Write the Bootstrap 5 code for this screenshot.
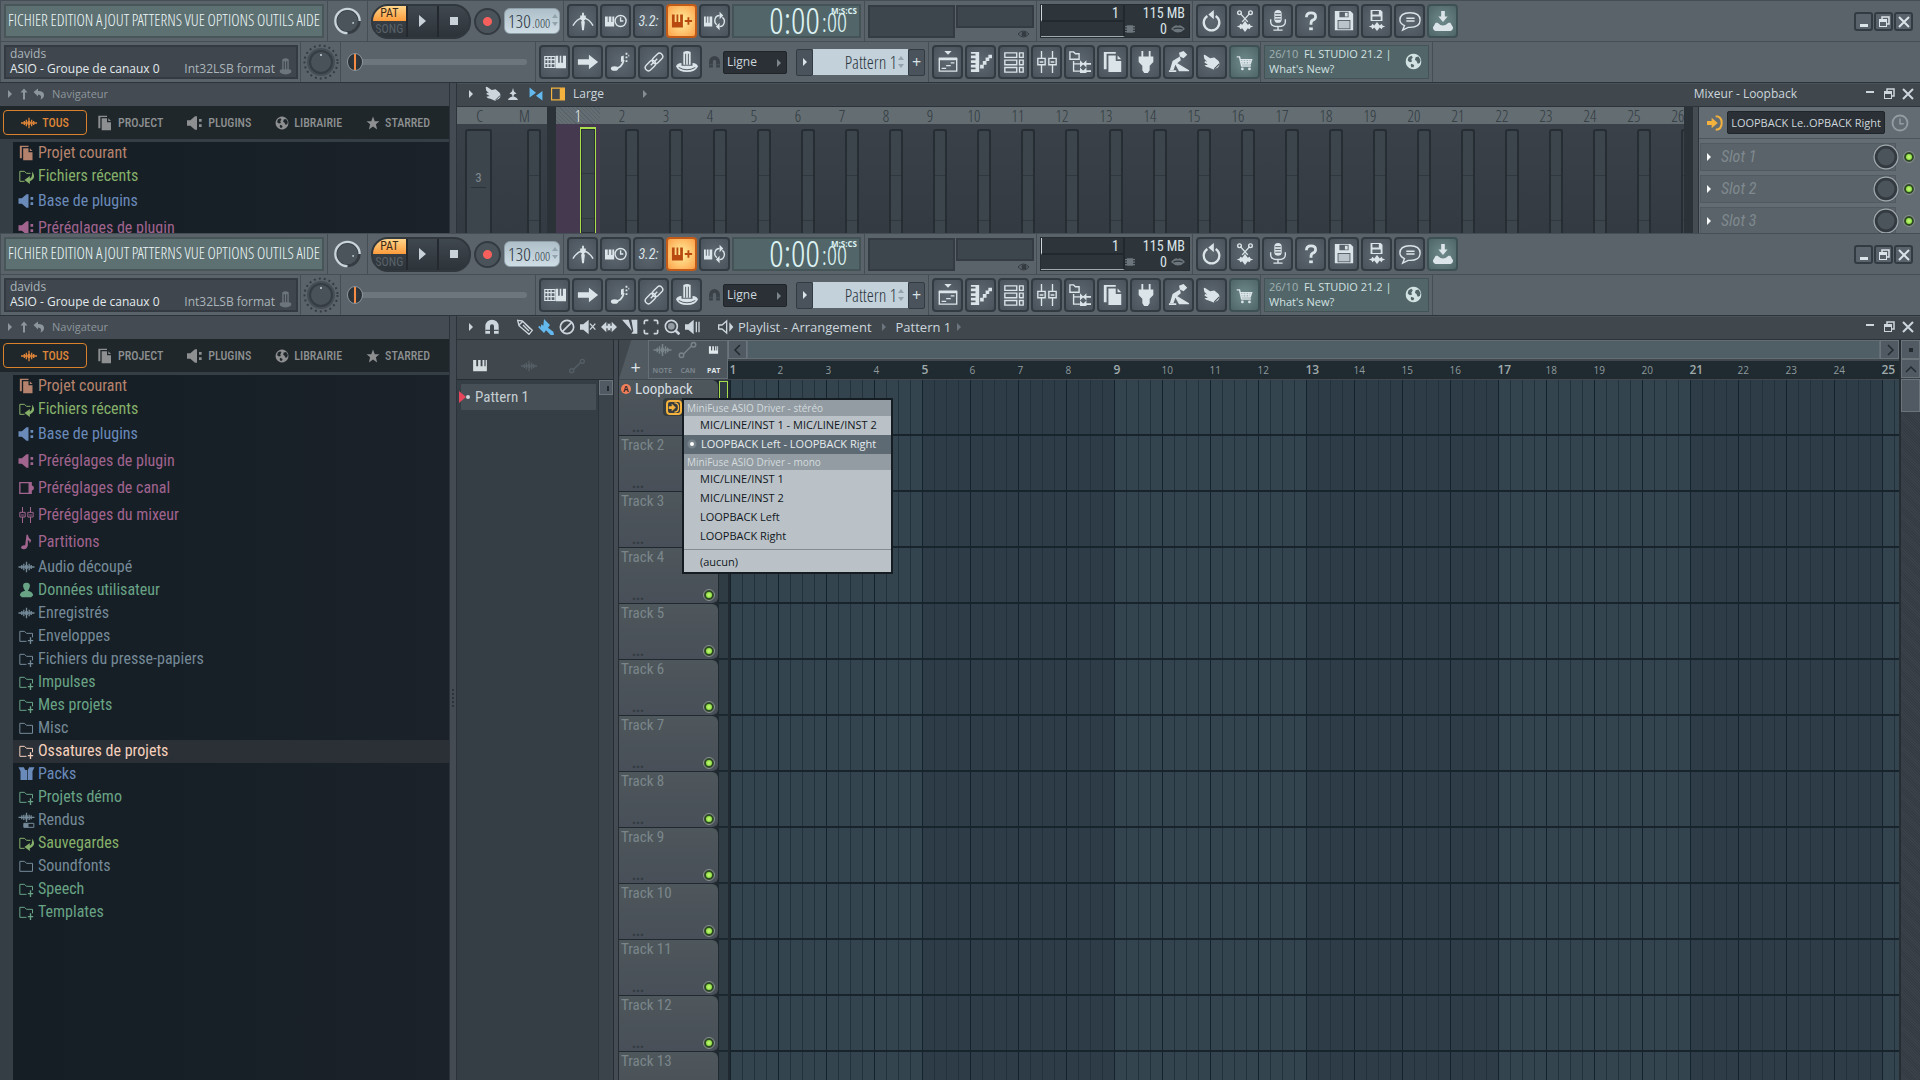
<!DOCTYPE html>
<html lang="fr">
<head>
<meta charset="utf-8">
<meta name="viewport" content="width=device-width, initial-scale=1">
<title>FL Studio - Loopback</title>
<link rel="stylesheet" href="https://cdn.jsdelivr.net/npm/bootstrap@5.3.0/dist/css/bootstrap.min.css">
<style>
:root{
  --ui:"Open Sans","Noto Sans",sans-serif;
  --cond:"Roboto Condensed",Roboto,sans-serif;
  --slim:"Open Sans Condensed Light","Open Sans Condensed","Roboto Condensed",sans-serif;
  --bar:#5b636a; --line:#454d55; --dark:#2c333a; --lcd:#526669; --pane:#40484e; --text:#cdd6dc; --ink:#dbe4e9;
}
body{font-family:var(--ui);font-size:12px;line-height:16px;background:#353d45;color:var(--text);overflow:hidden}
button,input,select{font:inherit;color:inherit;border:0;padding:0;background:none;border-radius:0}
a{color:inherit;text-decoration:none}
svg.ic{width:24px;height:24px;fill:currentColor;stroke-width:2;flex:none;display:block}
svg.sm{width:16px;height:16px}
.ln{fill:none;stroke:currentColor}
.shot{height:233px;overflow:hidden;flex:none}
.shot-main{flex:1 1 0;min-height:0}

/* toolbar */
.strip{height:41px;background:var(--bar);border-top:1px solid var(--line);box-shadow:inset 1px 0 var(--line)}
.seg{height:40px;border-right:1px solid var(--line);padding:0 3px;flex:none}
.g2{gap:2px}.g3{gap:3px}
.menu-lcd{width:320px;height:34px;background:#5d7173;border:2px solid #48565a;font:16px/28px var(--slim);color:#eef6f6;padding:0 2px}
.tb{width:31px;height:34px;border:2px solid #333b42;border-radius:4px;background:radial-gradient(#5e6870,#4a535b);color:var(--ink)}
.tb svg.ic{width:22px;height:22px}
.tb svg.s-hand,.tb svg.s-cart,.tb svg.s-globe{width:17px;height:17px}
.tb i{font:italic 14px/20px var(--cond)}
.tb-hot{background:radial-gradient(#fff2a0,#ffa851 90%);color:#b84a10;border-color:#c25a18}
.tb-teal{background:radial-gradient(#6f8a8b,#4f6567);border-color:#3d5154}
.transport{width:100px;height:35px;border-radius:17px;background:linear-gradient(#40484f,#2c3339);border:2px solid #30373d;overflow:hidden}
.patsong{width:33px;font:12px/14px var(--cond)}
.patsong b{font-weight:400;background:linear-gradient(#ffd58a,#ff9c3c);color:#3a2a18;height:15px;text-align:center;display:block}
.patsong span{color:#59626a;text-align:center;line-height:16px}
.tp{width:32px;border-left:2px solid #23292e;color:#c9d2d8}
.rec{width:27px;height:27px;border-radius:50%;background:radial-gradient(#f5605c 0 4px,#4a525a 5px);border:2px solid #333a40}
.tempo{width:56px;height:26px;border-radius:6px;background:linear-gradient(#aebfc9,#cfdde5);color:#2b3640;border:1px solid #90a0a9}
.tempo input{width:27px;font:19px/24px var(--slim);padding-left:3px}
.tempo small{font:13px/24px var(--slim);padding-top:2px;width:19px}
.tempo svg.ic,.patname svg.ic{color:#93a3ad}
.clock{width:129px;height:34px;background:var(--lcd);border:2px solid #445456;color:#ddf2f2;font-family:var(--slim);padding-right:12px;gap:2px;position:relative}
.clock .big{font-size:36px;line-height:29px}.clock .mid{font-size:25px;line-height:33px}
.clock em{position:absolute;right:2px;top:0;font:bold 8px/10px var(--ui)}
.scope{background:#3d454d;border:2px solid #343b42}
.mem{width:150px;height:34px;background:#2d353b;border:1px solid #272e33;font:14px/16px var(--cond);color:#dce4e8}
.mem .cpu{width:84px;border-right:2px solid #22292e;border-bottom:1px solid #a0a9ae}
.mem .cpu span{height:17px;border-bottom:2px solid #22292e;border-left:1px solid #cfd6da}
.wb{width:19px;height:19px;border:2px solid #333b42;border-radius:3px;background:#59626a;color:var(--ink)}
.hint{width:294px;height:34px;background:#3f464d;border:2px solid #333a41;line-height:15px;color:#abb5bb;padding:0 4px 1px}
.hint .hot{color:#e3eaee}
.pitch{-webkit-appearance:none;appearance:none;background:#6d767d;border-radius:3px;width:180px;height:6px}
.pitch::-webkit-slider-thumb{-webkit-appearance:none;width:16px;height:18px;border-radius:50%;background:linear-gradient(90deg,transparent 6px,#f58b45 6px 8px,transparent 8px),radial-gradient(#333b42,#262c31);border:1px solid #8b949b}
.darkbox{background:#2a3035;border:1px solid #1f2529;border-radius:2px;color:var(--text)}
.snapsel{width:64px;height:23px;padding-left:3px;appearance:none}
.snapwrap{position:relative}.snapwrap svg{position:absolute;right:0;top:4px;color:#7d868d;pointer-events:none}
.patbtn{width:17px;height:27px;border:1px solid #333b42;border-radius:2px;background:#4a535b;color:var(--ink)}
.patname{width:95px;height:26px;background:#c3d1db;color:#2b3640}
.patname input{width:84px;font:18px/24px var(--slim);text-align:right}
.news{width:165px;height:34px;background:var(--lcd);border:1px solid #445456;font-size:11px;line-height:15px;color:#d3e2e2;padding:0 2px 2px 4px}

/* browser */
.work{border-top:1px solid var(--dark);flex:1 1 0;min-height:0}
.browser{width:449px;flex:none}
.bhead{height:23px;background:#444b52;color:#8d969c;padding:0 0 2px 2px;font-size:11px}
.btabs{height:33px;background:#1f272b;color:#8d8f90;font:500 12px/16px var(--cond);padding-left:3px}
.btabs button{height:25px;display:flex;align-items:center;gap:5px}
.btabs .on{width:84px;border:1px solid #d9822b;border-radius:4px;color:#dd8438;justify-content:center;margin-right:10px}
.blist{margin:3px 0 0 13px;background:linear-gradient(90deg,#151e24,#1b222a);overflow:hidden;flex:1 1 0;font:16px/20px var(--cond)}
.blist a{height:23px;padding:0 0 2px 5px;white-space:nowrap}
.blist span{padding-left:3px}
.blist a.tall{height:27px}.blist a.sel{background:#2a3036;color:#f6d0bd!important}
.c-or{color:#b5836d}.c-gr{color:#86b06a}.c-bl{color:#6a8aba}.c-pk{color:#a0648f}.c-sl{color:#758a98}.c-tq{color:#69a386}
.splitter{width:8px;background:#444b52;border:solid var(--dark);border-width:0 1px;flex:none}
.splitter i{width:2px;height:18px;background:repeating-linear-gradient(#2c333a 0 2px,#0000 2px 4px)}

/* windows */
.whead{height:23px;flex:none;background:var(--pane);box-shadow:inset 0 1px #4a5259;padding:0 0 2px 6px}
.pl-title{font-size:13px}
.pt{margin-left:5px}.pt-pen,.pt-spk{margin-left:17px}.pt-brush{color:#63b9ee}
.rule{height:1px;background:var(--dark);flex:none}
.mcell{flex:0 0 44px}.mcell.wide{flex-basis:45px}
.mnum{height:17px;line-height:19px;background:#636d72;color:#31393f;font-size:16px;font-family:var(--slim);text-align:center;flex:none}
.mbody{background:linear-gradient(#3a4148,#333a41);flex:1;padding:5px 0 0 25px}
.meter{width:14px;height:100%;border:2px solid #262d33;border-bottom:0;border-radius:3px 3px 0 0;background:repeating-linear-gradient(transparent 0 44px,#30373d 44px 45px),#3d454c}
.meter.fat{width:27px;padding-top:40px;font:13px/14px var(--cond);text-align:center;color:#808a90;background:#3d454c}
.meter.fat span{display:block;border-bottom:1px solid #2b3238;margin:0 4px;padding-bottom:2px}
.cur .mnum{color:#eef3f5;background:repeating-linear-gradient(45deg,#636d72 0 2px,#59636a 2px 3px)}
.cur .mbody{background:#44394e;padding:3px 0 0 24px}
.cur .meter{width:16px;border:1px solid #a8de4b;border-top-width:2px;border-bottom:0;border-radius:0;box-shadow:inset 0 0 0 1px #262d33}
.vdiv{width:9px;background:#2b3238;flex:none}
.fx{width:222px;background:#636c72;border-left:1px solid var(--dark);flex:none}
.fxin{height:32px;border-bottom:1px solid #4c555b}
.fxin .darkbox{width:158px;height:23px;font-size:11px;margin-right:6px}
.slot{height:28px;margin:4px 0 0 1px}
.slot button.nm{width:196px;height:28px;border:1px solid #515a60;background:#5a6369;font:italic 16px/24px var(--cond);color:#7f898f;text-align:left}
.slot .kn{position:relative;margin-left:-24px}
.led{width:10px;height:10px;border-radius:50%;background:radial-gradient(#c6fa7a,#7ad62e);border:2px solid #2f4a25;outline:1px solid #88918f;appearance:none;flex:none;margin:0}

.picker{width:156px;flex:none;background:var(--pane)}
.ptabs{height:40px;flex:none;color:#555e65;border-bottom:1px solid #262d33;gap:30px;padding:12px 0 0 14px}
.plist{background:#353d45;flex:1}
.pitem{height:26px;margin:4px 2px 0 4px;background:#464f55;font:15px/26px var(--cond);color:#c4cdd2;border-radius:1px}
.pitem svg{margin-left:-2px}
.vsb{width:15px;background:#3c444b;border-left:1px solid #2b3238;flex:none}
.vsb button,.sbtn{border:1px solid #6b747a;background:#515a62;color:#222a30}
.vsb button{height:15px;width:14px}
.gutter{width:6px;background:#444b52;border:solid #262d33;border-width:0 1px;flex:none}
.plbar{height:40px;flex:none;background:#40484e}
.addtab{width:30px;height:39px;background:#515a61;color:var(--ink);clip-path:polygon(42% 0,100% 0,100% 100%,0 100%);font-size:18px;padding:14px 0 0 4px}
.ttabs{width:81px;height:39px;background:#4d565d;border:1px solid #666f76;color:#79838a}
.ttabs button{flex:1;font:bold 7px/10px var(--ui);display:flex;flex-direction:column;align-items:center;gap:7px}
.ttabs svg.ic{width:19px;height:18px}
.ttabs .on{color:#e3eaee}
.hsb{background:#505f66;border:1px solid #626e74;flex:1}
.sbtn{width:19px;height:19px;flex:none}
.ruler{height:18px;margin-top:2px;background:#1f2a31;color:#8f9a9c;overflow:hidden;font:10px/18px var(--ui)}
.ruler span{flex:0 0 48px;padding-left:2px}
.ruler span.maj{font-size:12px;font-weight:600;color:#a0aaab}
.thead{width:99px;flex:none;background:#20292f;overflow:hidden}
.trk{height:56px;border-bottom:1px solid #20292f;border-radius:0 6px 6px 0;background:linear-gradient(#4e575b,#484f58);font:15px/18px var(--cond);color:#7b868b;padding-left:2px;position:relative}
.trk .more{position:absolute;left:13px;bottom:0;font:bold 14px/16px var(--ui);color:#333b42}
.trk .led{position:absolute;right:4px;bottom:3px}
.first{color:#d5dde1}
.badgeA{width:10px;height:10px;border-radius:50%;background:#f0805c;color:#3a2a28;font:bold 8px/10px var(--ui);text-align:center}
.inbtn{position:absolute;right:0;top:18px;width:55px;height:18px;background:#353c40;border-radius:4px 0 0 4px;padding:1px 0 0 3px;color:#f3b13e}
.inbtn svg.ic{border:2px solid;border-radius:4px;width:16px;height:15px}
.pre{width:12px;flex:none;background:linear-gradient(#0000 54px,#1b2830 54px) 0 0/100% 56px,#303c44;border:solid #20292f;border-width:0 2px 0 1px}
.pre i{display:block;height:54px;border:1px solid #a8de4b;margin-top:1px}
.grid{background:
  linear-gradient(#0000 54px,#17242b 54px) 0 0/100% 56px,
  linear-gradient(90deg,#14222b 1px,#0000 1px) 0 0/48px 100%,
  linear-gradient(90deg,#22313a 1px,#0000 1px) 0 0/12px 100%,
  linear-gradient(90deg,#34444e 50%,#2d3c46 50%) 0 0/384px 100%;flex:1}
.rsb{width:21px;background:repeating-linear-gradient(45deg,#3a4148 0 1px,#343b42 1px 2px);border-left:2px solid #252d33;flex:none}
.popup{position:absolute;left:682px;top:398px;width:211px;border:2px solid #151d23;background:#bac2c8;color:#11171c;font:11px/17px var(--ui);z-index:5}
.popup h6{height:16px;margin:0;background:#929ca2;color:#d5dbdf;font:10px/16px var(--ui);padding-left:3px}
.popup button{display:flex;align-items:center;height:19px;width:100%;padding:0 0 2px 16px;white-space:nowrap}
.popup .sel{background:#5d6a73;color:#e6ecef;padding-left:3px}
.popup hr{margin:3px 0;border-top:1px solid #848d93;opacity:1}
</style>
</head>
<body class="vh-100 d-flex flex-column">

<svg class="d-none">
 <symbol id="tri" viewBox="0 0 16 16"><path d="M6 4l4 4-4 4z"/></symbol>
 <symbol id="play" viewBox="0 0 24 24"><path d="M9 6l7 6-7 6z"/></symbol>
 <symbol id="stop" viewBox="0 0 24 24"><path d="M8 8h8v8H8z"/></symbol>
 <symbol id="metro" viewBox="0 0 24 24"><path class="ln" stroke-width="1.500" d="M1 17Q5 10 12 8q7 2 11 9"/><path d="M12 9l2 4-1 9h-2l-1-9z"/><path d="M11 3h2v3h2v4l-3 2-3-2V6h2z"/></symbol>
 <symbol id="wait" viewBox="0 0 24 24"><path d="M0 7h3v6h1V7h3v6h1V7h2v11H0z"/><circle class="ln" stroke-width="1.500" cx="17" cy="12" r="6"/><path class="ln" stroke-width="1.500" d="M17 8v4h3"/></symbol>
 <symbol id="blend" viewBox="0 0 24 24"><path d="M1 5h3v8h2V5h2v8h2V5h3v14H1zM18 8h2v3h3v2h-3v3h-2v-3h-3v-2h3z"/></symbol>
 <symbol id="loop" viewBox="0 0 24 24"><path d="M0 7h2v7h1V7h2v7h1V7h3v11H0zM17 2l4 4-4 4zM17 22l-4-4 4-4z"/><path class="ln" stroke-width="1.500" d="M14 16q-3-2-2-6 1-4 5-4M20 8q3 2 2 6-1 4-5 4"/></symbol>
 <symbol id="piano" viewBox="0 0 24 24"><path d="M1 3h5v10h3V3h4v10h3V3h3v10h2V3h2v18H1z"/></symbol>
 <symbol id="undo" viewBox="0 0 24 24"><path class="ln" stroke-width="2.500" d="M7 6.500a8.500 8.500 0 1 0 9 0"/><path d="M8 5l6-5v10z"/></symbol>
 <symbol id="cut" viewBox="0 0 24 24"><path class="ln" stroke-width="1.500" d="M7 4l8 9M17 4l-8 9"/><circle class="ln" stroke-width="1.500" cx="6" cy="3" r="2"/><circle class="ln" stroke-width="1.500" cx="18" cy="3" r="2"/><path d="M3 18l3-1 1-2 2 1 3-4 3 4 2-1 1 2 3 1-3 1-1 2-2-1-3 4-3-4-2 1-1-2z"/></symbol>
 <symbol id="mic" viewBox="0 0 24 24"><rect x="8" y="0" width="8" height="14" rx="4"/><path class="ln" stroke-width="1.500" d="M4 10v3q0 5 8 5t8-5v-3M12 18v4M7 22h10"/><path stroke="#4a535b" stroke-width="1" d="M9 4h6M9 7h6M9 10h6"/></symbol>
 <symbol id="help" viewBox="0 0 24 24"><path class="ln" stroke-width="3" d="M7 8q0-5 5-5t5 4q0 3-3 4-2 1-2 4v1"/><path d="M10 19h4v3h-4z"/></symbol>
 <symbol id="save" viewBox="0 0 24 24"><path fill-rule="evenodd" d="M2 1h17l3 3v18H2zm5 1v6h10V2zm-2 9v10h14V11zM13 3h3v4h-3z"/><path opacity=".75" d="M6 12h12v8H6z"/></symbol>
 <symbol id="savenew" viewBox="0 0 24 24"><path fill-rule="evenodd" d="M5 0h11l2 2v10H5zm2 1v4h7V1zm0 6v4h9V7z"/><path d="M3 18l3-1 1-2 2 2 3-4 3 4 2-2 1 2 3 1-3 1-1 2-2-2-3 4-3-4-2 2-1-2z"/></symbol>
 <symbol id="chat" viewBox="0 0 24 24"><path class="ln" stroke-width="1.500" d="M12 3c7 0 11 3 11 8s-4 8-11 8h-2l-6 3 2-5q-5-2-5-6c0-5 4-8 11-8z"/><path class="ln" stroke-width="1.500" d="M8 9h9M8 12h9"/></symbol>
 <symbol id="dl" viewBox="0 0 24 24"><path d="M10 1h4v6h3l-5 6-5-6h3zM1 19l3-5h2q6 6 12 0h2l3 5q0 4-5 4H6q-5 0-5-4z"/></symbol>
 <symbol id="min" viewBox="0 0 16 16"><path d="M4 10h8v3H4z"/></symbol>
 <symbol id="dash" viewBox="0 0 16 16"><path d="M4 5h8v2H4z"/></symbol>
 <symbol id="rest" viewBox="0 0 16 16"><path class="ln" stroke-width="1.500" d="M6 5V3h7v7h-2"/><path fill-rule="evenodd" d="M3 5h8v8H3zm1 3v4h6V8z"/></symbol>
 <symbol id="x" viewBox="0 0 16 16"><path class="ln" d="M3 3l10 10M13 3L3 13"/></symbol>
 <symbol id="jack" viewBox="0 0 16 24"><path d="M4 4q4-3 8 0v12H4zM1 17q7-4 14 0v3q-7 5-14 0z"/><path stroke="#3f464d" stroke-width="1.500" d="M6.500 6v10M9.500 6v10"/></symbol>
 <symbol id="typing" viewBox="0 0 28 24"><path class="ln" stroke-width="1.500" d="M1 5h13v14H1zM5 5v14M9 5v14M1 9h13M1 14h13"/><path d="M15 4h3v9h2V4h2v9h2V4h4v16H15z"/></symbol>
 <symbol id="right" viewBox="0 0 24 24"><path d="M1 9h12V4l10 8-10 8v-5H1z"/></symbol>
 <symbol id="slide" viewBox="0 0 24 24"><path class="ln" stroke-width="2" d="M5 19q8 0 10-9"/><ellipse cx="5" cy="19" rx="4" ry="2.500"/><path d="M12 6l3-1v6l-3 1zM17 2h2v2h-2zM17 6h2v2h-2zM17 10h2v2h-2zM20 4h1v2h-1z"/></symbol>
 <symbol id="link" viewBox="0 0 24 24"><g class="ln" stroke-width="1.500" transform="rotate(-45 12 12)"><rect x="0" y="8.500" width="13" height="7" rx="3.500"/><rect x="11" y="8.500" width="13" height="7" rx="3.500"/><path d="M7 12h10"/></g></symbol>
 <symbol id="dock" viewBox="0 0 24 24"><path d="M8 1q4-2 8 0v14H8z"/><path d="M0 17q1-4 6-4v3h12v-3q5 0 6 4-3 6-12 6T0 17z"/><path stroke="#4a535b" stroke-width="1" fill="none" d="M10.500 3v12M13.500 3v12M3 18q9 5 18 0"/></symbol>
 <symbol id="magnet" viewBox="0 0 24 24"><path d="M2 22V11a10 10 0 0 1 20 0v11h-7V11a3 3 0 0 0-6 0v11z"/><path stroke="#4a535b" d="M2 17h7M15 17h7"/></symbol>
 <symbol id="plw" viewBox="0 0 24 24"><path d="M8 0h8l-4 4zM2 7h20v3H2z"/><path class="ln" stroke-width="1.500" d="M2.500 8v14h19V8M5 19h5M10 16h5M15 13h4"/></symbol>
 <symbol id="prw" viewBox="0 0 24 24"><path d="M1 1h9v22H1v-3h5v-2H1v-3h5v-2H1v-3h5V8H1V5h5V3H1zM11 15h4v4h-4zM14 11h4v4h-4zM17 7h4v4h-4zM20 4h4v4h-4z"/></symbol>
 <symbol id="rack" viewBox="0 0 24 24"><path class="ln" stroke-width="1.500" d="M2 2h13v5H2zM2 10h13v5H2zM2 18h13v5H2zM18 2h4v5h-4zM18 10h4v5h-4zM18 18h4v5h-4z"/></symbol>
 <symbol id="mix" viewBox="0 0 24 24"><path class="ln" stroke-width="1.500" d="M6 0v8M6 15v9M18 0v8M18 15v9M2 8h8v7H2zM14 8h8v7h-8zM4 12h4M16 12h4"/></symbol>
 <symbol id="tree" viewBox="0 0 24 24"><path class="ln" stroke-width="1.500" d="M1 1h4l2 2h4v6H1zM5 11v11h7M5 14h7"/><path d="M12 10l3 3h1l3-3v3h5v2h-5v3l-3-3h-1l-3 3zM12 18l3 3h1l3-3v3h5v2h-5v1H12z"/></symbol>
 <symbol id="docs" viewBox="0 0 24 24"><path d="M2 1h13v2H5v17H2zM7 5h8v6h6v12H7zM17 5l4 4h-4z"/></symbol>
 <symbol id="plug" viewBox="0 0 24 24"><path d="M7 0h2v6h6V0h2v6h3v6l-4 4v5l-2 3h-4l-2-3v-5l-4-4V6h3z"/></symbol>
 <symbol id="plugh" viewBox="0 0 24 24"><path d="M0 8h5l7-6h3v20h-3l-7-6H0zM18 6h4v4h-4zM18 14h4v4h-4z"/></symbol>
 <symbol id="robot" viewBox="0 0 24 24"><path d="M12 2l5-2 4 4-4 4-4-2zM13 6l-8 5-3 10h4l2-6 6-5z"/><path d="M7 13l1-1 15 9v1H12zM1 21h8v2H1z"/></symbol>
 <symbol id="hand" viewBox="0 0 24 24"><path d="M1 2q1-2 3 0l6 4 6-1 6 5q3 5-1 9l-6 3-7-3q-4 0-6-3l5-1-5-3 1-2 3 1-4-4z"/><path stroke="#434b52" stroke-width="1.500" fill="none" d="M16 21l7-7"/></symbol>
 <symbol id="cart" viewBox="0 0 24 24"><path class="ln" d="M1 4h4l3 13h13M6 8h16l-2 6H8M10 8v6M14 8v6M18 8v6M6 11h15"/><circle cx="9" cy="21" r="2"/><circle cx="19" cy="21" r="2"/></symbol>
 <symbol id="globe" viewBox="0 0 24 24"><path fill-rule="evenodd" d="M12 1a11 11 0 1 0 .01 0zM5 6l4-2 2 2-2 3 1 3-3 1-3-2v-2zM15 6l4-1 3 5-1 4-3 1-2-4-2-1zM9 15l4 2-1 3-3 0-1-3z"/></symbol>
 <symbol id="eye" viewBox="0 0 24 24"><path class="ln" d="M1 12q11-12 22 0-11 12-22 0z"/><circle cx="13" cy="12" r="5"/></symbol>
 <symbol id="lips" viewBox="0 0 24 16"><path d="M0 8q8-9 12-5 4-4 12 5-12 12-24 0z"/><path stroke="#2d353b" stroke-width="2" fill="none" d="M4 8q8-3 16 0"/></symbol>
 <symbol id="chip" viewBox="0 0 16 16"><path d="M3 2h10v12H3zM0 3h16v2H0zM0 7h16v2H0zM0 11h16v2H0z"/></symbol>
 <symbol id="knob" viewBox="0 0 32 32"><circle cx="16" cy="16" r="14" fill="#353d43"/><circle cx="16" cy="16" r="11" fill="#4b545b"/><path d="M29 16A13 13 0 1 0 16 29" fill="none" stroke="#c9d4da" stroke-width="2.500"/><circle cx="22" cy="18" r="1" fill="#c9d4da"/></symbol>
 <symbol id="knob2" viewBox="0 0 36 36"><circle cx="18" cy="18" r="16.500" fill="none" stroke="#343c42" stroke-dasharray="2 3"/><circle cx="18" cy="18" r="13" fill="#353d43" stroke="#454e55"/><circle cx="18" cy="18" r="10" fill="#495259"/><circle cx="18" cy="11" r="1" fill="#c9d4da"/></symbol>
 <symbol id="knob3" viewBox="0 0 28 28"><circle cx="14" cy="14" r="13" fill="#333b41"/><circle cx="14" cy="14" r="12" fill="none" stroke="#9ba5aa" stroke-width="1.500"/><circle cx="14" cy="14" r="8.500" fill="#4b545b"/></symbol>
 <symbol id="wave" viewBox="0 0 24 24"><path d="M0 11h24v2H0zM4 9h2v6H4zM7 7h2v10H7zM10 9h1V4h2v5h1v6h-1v5h-2v-5h-1zM15 7h2v10h-2zM18 9h2v6h-2z"/></symbol>
 <symbol id="star" viewBox="0 0 24 24"><path d="M12 1l3 8h8l-6 5 2 9-7-5-7 5 2-9-6-5h8z"/></symbol>
 <symbol id="up" viewBox="0 0 24 24"><path d="M12 1l7 8h-5v14h-4V9H5z"/></symbol>
 <symbol id="back" viewBox="0 0 24 24"><path d="M1 8l9-7v5q12 0 12 8 0 6-7 9 4-9-5-10v4z"/></symbol>
 <symbol id="fold" viewBox="0 0 24 24"><path class="ln" stroke-width="1.500" d="M2 5h7l3 3h9v12H2z"/></symbol>
 <symbol id="foldp" viewBox="0 0 24 24"><path class="ln" stroke-width="1.500" d="M12 20H2V5h7l3 3h9v6"/><path d="M17 14h2v4h3v2h-3v4h-2v-4h-3v-2h3z"/></symbol>
 <symbol id="foldr" viewBox="0 0 24 24"><path class="ln" stroke-width="1.500" d="M9 20H2V5h7l3 3h6"/><path d="M20 5q8 10-3 15v4l-8-6 8-6v4q5-3 3-11z"/></symbol>
 <symbol id="chan" viewBox="0 0 24 24"><path class="ln" d="M2 4h14v16H2z"/><path d="M16 3h4v5l3 2v4l-3 2v5h-4z"/></symbol>
 <symbol id="note" viewBox="0 0 24 24"><path d="M12 1h2q1 6 5 8-1 4-2 5 0-4-3-5v8q-1 6-6 6-5-1-4-4 2-3 6-2z"/></symbol>
 <symbol id="user" viewBox="0 0 24 24"><path d="M12 1q6 0 5 6-1 4-3 6 8 2 8 7l-3 3H5l-3-3q0-5 8-7-2-2-3-6-1-6 5-6z"/></symbol>
 <symbol id="pack" viewBox="0 0 24 24"><path d="M0 2h8l2 4v15H3V8zM24 2h-8l-2 4v15h7V8zM10 6h3v15h-3z"/></symbol>
 <symbol id="rend" viewBox="0 0 24 24"><path d="M0 7h24v2H0zM4 5h2v6H4zM7 4h2v8H7zM10 5h1V1h2v4h1v6h-1v4h-2v-4h-1zM15 4h2v8h-2zM18 5h2v6h-2z"/><path class="ln" stroke-width="1.500" d="M8 17h15v6H8z"/><path d="M8 17h7v6H8z"/></symbol>
 <symbol id="pin" viewBox="0 0 24 24"><path d="M12 0l2 7 5 4-5 2-1 4q7 1 9 7H2q2-6 9-7l-1-4-5-2 5-4z"/></symbol>
 <symbol id="bow" viewBox="0 0 24 24"><path d="M1 1l11 9-11 8zM23 7v16l-11-8z"/></symbol>
 <symbol id="side" viewBox="0 0 24 24"><path class="ln" d="M1 2h22v20H1z"/><path d="M15 2h8v20h-8z"/></symbol>
 <symbol id="route" viewBox="0 0 24 24"><path d="M0 9h7V4l9 8-9 8v-5H0z"/><path class="ln" stroke-width="3" d="M13 2q9 0 9 10t-9 10"/></symbol>
 <symbol id="timer" viewBox="0 0 24 24"><circle class="ln" cx="12" cy="12" r="10" stroke-width="2.500"/><path class="ln" d="M12 6v7h5"/></symbol>
 <symbol id="pen" viewBox="0 0 24 24"><path class="ln" d="M1 2l7 1 15 14-5 6L3 10zM8 4l-5 5M9 9l9 9M12 7l8 8"/></symbol>
 <symbol id="brush" viewBox="0 0 24 24"><path d="M9 0l9 9-3 4 8 6 1 5h-5l-7-7-3 4-9-9 3-2 1 3 1-5 3 2z"/></symbol>
 <symbol id="no" viewBox="0 0 24 24"><circle class="ln" cx="12" cy="12" r="10" stroke-width="2.500"/><path class="ln" stroke-width="2.500" d="M19 5L5 19"/></symbol>
 <symbol id="mute" viewBox="0 0 24 24"><path d="M0 8h5l8-7v22l-8-7H0z"/><path class="ln" d="M15 7l8 9M23 7l-8 9"/></symbol>
 <symbol id="slip" viewBox="0 0 24 24"><path d="M0 12l8-8v6h2V6l2 2 2-2v4h2V4l8 8-8 8v-6h-2v4l-2-2-2 2v-4H8v6z"/></symbol>
 <symbol id="slice" viewBox="0 0 24 24"><path d="M0 1h10l5 17zM14 1h9v21h-9l3-4z"/></symbol>
 <symbol id="selr" viewBox="0 0 24 24"><path class="ln" stroke-width="2.500" d="M2 8V4q0-2 2-2h4M16 2h4q2 0 2 2v4M22 16v4q0 2-2 2h-4M8 22H4q-2 0-2-2v-4"/></symbol>
 <symbol id="zoomi" viewBox="0 0 24 24"><circle class="ln" cx="11" cy="11" r="9" stroke-width="2.500"/><circle cx="11" cy="11" r="5" opacity=".6"/><path class="ln" stroke-width="4" d="M17 17l6 6"/></symbol>
 <symbol id="playb" viewBox="0 0 24 24"><path d="M0 8h5l8-7v22l-8-7H0zM16 4h2v16h-2zM20 4h2v16h-2z"/></symbol>
 <symbol id="spk" viewBox="0 0 24 24"><path class="ln" d="M1 9h5l7-6v18l-7-6H1z"/><path d="M17 5l6 7-6 7z"/></symbol>
 <symbol id="auto" viewBox="0 0 24 24"><path class="ln" d="M7 17L17 7"/><circle class="ln" cx="4" cy="19" r="3"/><circle class="ln" cx="20" cy="5" r="3"/></symbol>
 <symbol id="spin" viewBox="0 0 8 16"><path d="M1 6l3-4 3 4zM1 10l3 4 3-4z"/></symbol>
 <symbol id="chev" viewBox="0 0 16 16"><path class="ln" stroke-width="1.500" d="M6 3l5 5-5 5"/></symbol>
 <symbol id="chevl" viewBox="0 0 16 16"><path class="ln" stroke-width="1.500" d="M11 3L6 8l5 5"/></symbol>
 <symbol id="chevu" viewBox="0 0 16 16"><path class="ln" stroke-width="1.500" d="M3 11l5-5 5 5"/></symbol>
 <symbol id="dot" viewBox="0 0 16 16"><path d="M6 6h4v4H6z"/></symbol>
 <symbol id="bar" viewBox="0 0 16 16"><path d="M7 5h2v5H7z"/></symbol>
</svg>

<template id="toolbarTpl">
 <header>
  <div class="strip d-flex">
   <div class="seg d-flex align-items-center ps-1"><nav class="menu-lcd d-flex justify-content-between"><a href="#">FICHIER</a><a href="#">EDITION</a><a href="#">AJOUT</a><a href="#">PATTERNS</a><a href="#">VUE</a><a href="#">OPTIONS</a><a href="#">OUTILS</a><a href="#">AIDE</a></nav></div>
   <div class="seg d-flex align-items-center"><button aria-label="Volume"><svg class="ic" style="width:33px;height:30px"><use href="#knob"/></svg></button></div>
   <div class="seg d-flex align-items-center g3">
    <div class="transport d-flex"><button class="patsong d-flex flex-column"><b class="w-100">PAT</b><span class="w-100">SONG</span></button><button class="tp d-grid" aria-label="Lecture"><svg class="ic m-auto"><use href="#play"/></svg></button><button class="tp d-grid" aria-label="Stop"><svg class="ic m-auto"><use href="#stop"/></svg></button></div>
    <button class="rec" aria-label="Enregistrer"></button>
    <div class="tempo d-flex"><input aria-label="Tempo" value="130"><small>.000</small><svg class="ic" style="width:8px;height:22px"><use href="#spin"/></svg></div>
   </div>
   <div class="seg d-flex align-items-center g2">
    <button class="tb d-grid" data-i="metro"></button><button class="tb d-grid" data-i="wait"></button><button class="tb" aria-label="Compte à rebours"><i>3.2:</i></button><button class="tb tb-hot d-grid" data-i="blend"></button><button class="tb d-grid" data-i="loop"></button>
    <div class="clock d-flex justify-content-end"><span class="big">0:00</span><span class="mid">:00</span><em>M:S:CS</em></div>
   </div>
   <div class="seg d-flex pt-1 pe-0"><div class="scope" style="width:87px;height:33px"></div><div style="width:81px;padding:0 2px 0 1px"><div class="scope" style="height:23px"></div><svg class="ic ms-auto me-1" style="width:13px;height:12px;color:#343c42"><use href="#eye"/></svg></div></div>
   <div class="seg d-flex align-items-center pe-0" style="width:156px"><div class="mem d-flex"><div class="cpu text-end"><span class="d-block pe-1">1</span></div><div class="flex-grow-1 text-end pe-1"><div>115 MB</div><div class="d-flex align-items-center"><svg class="ic" style="width:10px;height:10px;color:#6c757b"><use href="#chip"/></svg><span class="ms-auto me-1">0</span><svg class="ic" style="width:14px;height:10px;color:#6c757b"><use href="#lips"/></svg></div></div></div></div>
   <div class="d-flex align-items-center g2" style="padding-left:3px">
    <button class="tb d-grid" data-i="undo"></button><button class="tb d-grid" data-i="cut"></button><button class="tb d-grid" data-i="mic"></button><button class="tb d-grid" data-i="help"></button><button class="tb d-grid" data-i="save"></button><button class="tb d-grid" data-i="savenew"></button><button class="tb d-grid" data-i="chat"></button><button class="tb tb-teal d-grid" data-i="dl"></button>
   </div>
   <div class="ms-auto d-flex align-items-center" style="gap:1px;padding-right:7px"><button class="wb d-grid" data-s="min"></button><button class="wb d-grid" data-s="rest"></button><button class="wb d-grid" data-s="x"></button></div>
  </div>
  <div class="strip d-flex">
   <div class="seg d-flex align-items-center ps-1" style="padding-right:2px"><div class="hint d-flex align-items-end"><div class="flex-grow-1"><div>davids</div><div class="d-flex justify-content-between"><span class="hot">ASIO - Groupe de canaux 0</span><span class="pe-1">Int32LSB format</span></div></div><svg class="ic" style="width:13px;height:20px;color:#6c757b"><use href="#jack"/></svg></div></div>
   <div class="seg d-flex align-items-center px-0" style="width:40px"><button class="mx-auto" aria-label="Pitch"><svg class="ic" style="width:36px;height:36px"><use href="#knob2"/></svg></button></div>
   <div class="seg d-flex align-items-center" style="width:195px;padding-left:6px"><input type="range" class="pitch" value="0" aria-label="Position"></div>
   <div class="seg d-flex align-items-center g2">
    <button class="tb d-grid" data-i="typing"></button><button class="tb d-grid" data-i="right"></button><button class="tb d-grid" data-i="slide"></button><button class="tb d-grid" data-i="link"></button><button class="tb d-grid" data-i="dock"></button>
    <svg class="ic sm ms-1" style="width:13px;color:#3a4248"><use href="#magnet"/></svg>
    <div class="snapwrap"><select class="snapsel darkbox" aria-label="Aimant"><option>Ligne</option></select><svg class="ic sm"><use href="#tri"/></svg></div>
    <div class="d-flex align-items-center" style="margin-left:7px"><button class="patbtn d-grid" data-s="tri"></button><div class="patname d-flex align-items-center"><input aria-label="Pattern" value="Pattern 1"><svg class="ic" style="width:8px;height:20px"><use href="#spin"/></svg></div><button class="patbtn fs-6">+</button></div>
   </div>
   <div class="seg d-flex align-items-center pe-0 g2">
    <button class="tb d-grid" data-i="plw"></button><button class="tb d-grid" data-i="prw"></button><button class="tb d-grid" data-i="rack"></button><button class="tb d-grid" data-i="mix"></button><button class="tb d-grid" data-i="tree"></button><button class="tb d-grid" data-i="docs"></button><button class="tb d-grid" data-i="plug"></button><button class="tb d-grid" data-i="robot"></button><button class="tb d-grid" data-i="hand"></button><button class="tb tb-teal d-grid" data-i="cart"></button>
   </div>
   <div class="seg d-flex align-items-center"><a href="#" class="news d-flex align-items-center"><span class="flex-grow-1"><span style="color:#a1b1b1">26/10</span>&nbsp; FL STUDIO 21.2 |<br>What's New?</span><svg class="ic me-1" style="width:17px;height:17px"><use href="#globe"/></svg></a></div>
  </div>
 </header>
</template>

<template id="browserTpl">
 <aside class="browser d-flex flex-column">
  <div class="bhead d-flex align-items-center"><svg class="ic sm"><use href="#tri"/></svg><svg class="ic" style="width:12px;height:14px"><use href="#up"/></svg><svg class="ic" style="width:12px;height:14px;margin:0 7px 0 3px"><use href="#back"/></svg><span>Navigateur</span></div>
  <div class="btabs d-flex align-items-center">
   <button class="on"><svg class="ic sm"><use href="#wave"/></svg>TOUS</button>
   <button class="me-4"><svg class="ic sm"><use href="#docs"/></svg>PROJECT</button>
   <button class="me-4"><svg class="ic sm"><use href="#plugh"/></svg>PLUGINS</button>
   <button class="me-4"><svg class="ic" style="width:14px;height:14px"><use href="#globe"/></svg>LIBRAIRIE</button>
   <button><svg class="ic" style="width:14px;height:14px"><use href="#star"/></svg>STARRED</button>
  </div>
  <nav class="blist"></nav>
 </aside>
</template>

<section class="shot d-flex flex-column">
 <div data-use="toolbarTpl"></div>
 <div class="work d-flex">
  <div data-use="browserTpl" class="d-flex"></div>
  <div class="splitter"></div>
  <main class="flex-grow-1 d-flex flex-column overflow-hidden">
   <div class="whead d-flex align-items-center">
    <svg class="ic sm"><use href="#tri"/></svg><svg class="ic sm" style="margin:0 6px"><use href="#hand"/></svg><svg class="ic sm" style="width:12px"><use href="#pin"/></svg><svg class="ic sm" style="width:14px;color:#63b9ee;margin:0 8px 0 10px"><use href="#bow"/></svg><svg class="ic sm me-2" style="width:14px;color:#f3b13e"><use href="#side"/></svg><span>Large</span><svg class="ic sm" style="margin-left:33px;color:#858e94"><use href="#tri"/></svg>
    <span class="ms-auto">Mixeur - Loopback</span><div class="d-flex" style="width:123px;gap:3px;padding:0 4px 0 65px"><button data-s="dash" class="d-grid"></button><button data-s="rest" class="d-grid"></button><button data-s="x" class="d-grid"></button></div>
   </div>
   <div class="rule"></div>
   <div class="d-flex flex-grow-1 overflow-hidden">
    <div class="mcell wide d-flex flex-column"><div class="mnum">C</div><div class="mbody ps-2"><div class="meter fat"><span>3</span></div></div></div>
    <div class="mcell wide d-flex flex-column"><div class="mnum">M</div><div class="mbody"><div class="meter"></div></div></div>
    <div class="vdiv"></div>
    <div id="mixer" class="d-flex flex-grow-1 overflow-hidden" style="width:0"></div>
    <div class="vdiv"></div><div style="width:5px;background:#454d53"></div>
    <div class="fx">
     <div class="fxin d-flex align-items-center px-1"><svg class="ic ms-1 me-1" style="width:16px;height:20px;color:#f3b13e"><use href="#route"/></svg><button class="darkbox text-nowrap">LOOPBACK Le..OPBACK Right</button><svg class="ic" style="width:18px;height:18px;color:#939ca1"><use href="#timer"/></svg></div>
     <div id="slots"></div>
    </div>
   </div>
  </main>
 </div>
</section>

<section class="shot-main d-flex flex-column">
 <div data-use="toolbarTpl"></div>
 <div class="work d-flex">
  <div data-use="browserTpl" class="d-flex"></div>
  <div class="splitter d-grid"><i class="m-auto"></i></div>
  <main class="flex-grow-1 d-flex flex-column overflow-hidden">
   <div class="whead d-flex align-items-center pl-title" id="plhead">
    <svg class="ic sm"><use href="#tri"/></svg>
    <span class="ms-1">Playlist - Arrangement</span><svg class="ic sm mx-1 text-secondary"><use href="#tri"/></svg><span>Pattern 1</span><svg class="ic sm text-secondary"><use href="#tri"/></svg>
    <div class="ms-auto d-flex" style="gap:3px;padding-right:4px"><button data-s="dash" class="d-grid"></button><button data-s="rest" class="d-grid"></button><button data-s="x" class="d-grid"></button></div>
   </div>
   <div class="rule"></div>
   <div class="d-flex flex-grow-1 overflow-hidden">
    <div class="picker d-flex flex-column">
     <div class="ptabs d-flex align-items-center"><svg class="ic" style="width:18px;height:15px;color:#d5dde1"><use href="#piano"/></svg><svg class="ic sm" style="width:20px"><use href="#wave"/></svg><svg class="ic sm"><use href="#auto"/></svg></div>
     <div class="d-flex flex-grow-1"><div class="plist"><div class="pitem d-flex align-items-center"><svg width="12" height="14" viewBox="0 0 12 14"><path d="M0 1l7 6-7 6z" fill="#e5465c"/><circle cx="9" cy="7" r="2" fill="#cdd6dc"/></svg><span class="ms-1">Pattern 1</span></div></div><div class="vsb"><button class="d-grid" data-s="bar"></button></div></div>
    </div>
    <div class="gutter"></div>
    <div class="flex-grow-1 d-flex flex-column overflow-hidden">
     <div class="plbar d-flex">
      <button class="addtab">+</button>
      <div class="ttabs d-flex"><button><svg class="ic"><use href="#wave"/></svg>NOTE</button><button><svg class="ic"><use href="#auto"/></svg>CAN</button><button class="on"><svg class="ic py-1"><use href="#piano"/></svg>PAT</button></div>
      <div class="flex-grow-1 overflow-hidden"><div class="d-flex"><button class="sbtn d-grid" data-s="chevl"></button><div class="hsb"></div><button class="sbtn d-grid" data-s="chev"></button></div><div class="ruler d-flex" id="ruler"></div></div>
     </div>
     <div class="d-flex flex-grow-1 overflow-hidden"><div class="thead" id="tracks"></div><div class="pre"><i></i></div><div class="grid"></div></div>
    </div>
    <div class="rsb"><button class="sbtn d-grid" data-s="dot"></button><button class="sbtn d-grid" data-s="chevu"></button><div class="sbtn" style="height:33px;margin-top:1px"></div></div>
   </div>
  </main>
 </div>
</section>

<div class="popup">
 <h6>MiniFuse ASIO Driver - stéréo</h6>
 <button>MIC/LINE/INST 1 - MIC/LINE/INST 2</button>
 <button class="sel"><svg width="14" height="10" viewBox="0 0 14 10"><circle cx="5" cy="5" r="4.500" fill="#76838b"/><circle cx="5" cy="5" r="2" fill="#fff"/></svg>LOOPBACK Left - LOOPBACK Right</button>
 <h6>MiniFuse ASIO Driver - mono</h6>
 <button>MIC/LINE/INST 1</button><button>MIC/LINE/INST 2</button><button>LOOPBACK Left</button><button>LOOPBACK Right</button>
 <hr>
 <button>(aucun)</button>
</div>

<script src="https://cdn.jsdelivr.net/npm/bootstrap@5.3.0/dist/js/bootstrap.bundle.min.js"></script>
<script>
const icon=(n,c='')=>`<svg class="ic m-auto s-${n} ${c}"><use href="#${n}"/></svg>`;
document.querySelectorAll('[data-use]').forEach(h=>h.append(document.getElementById(h.dataset.use).content.cloneNode(true)));
const tools=['magnet','pen','brush','no','mute','slip','slice','selr','zoomi','playb','spk'];
document.querySelector('#plhead svg').insertAdjacentHTML('afterend',tools.map(t=>`<button class="pt pt-${t}" aria-label="${t}">${icon(t,'sm')}</button>`).join(''));
document.querySelectorAll('[data-i]').forEach(b=>{b.innerHTML=icon(b.dataset.i);b.setAttribute('aria-label',b.dataset.i)});
document.querySelectorAll('[data-s]').forEach(b=>{b.innerHTML=icon(b.dataset.s,'sm');b.setAttribute('aria-label',b.dataset.s)});
const rows=[['docs','or','Projet courant'],['foldr','gr','Fichiers récents'],['plugh','bl','Base de plugins',1],['plugh','pk','Préréglages de plugin',1],['chan','pk','Préréglages de canal',1],['mix','pk','Préréglages du mixeur',1],['note','pk','Partitions',1],['wave','sl','Audio découpé'],['user','tq','Données utilisateur'],['wave','sl','Enregistrés'],['foldp','sl','Enveloppes'],['foldp','sl','Fichiers du presse-papiers'],['foldp','tq','Impulses'],['foldp','tq','Mes projets'],['fold','sl','Misc'],['foldp','or sel','Ossatures de projets'],['pack','bl','Packs'],['foldp','tq','Projets démo'],['rend','sl','Rendus'],['foldr','gr','Sauvegardes'],['fold','sl','Soundfonts'],['foldp','tq','Speech'],['foldp','tq','Templates']];
document.querySelectorAll('.blist').forEach(l=>l.innerHTML=rows.map(([i,c,t,b])=>`<a href="#" class="d-flex align-items-center c-${c}${b?' tall':''}"><svg class="ic" style="width:17px;height:16px"><use href="#${i}"/></svg><span>${t}</span></a>`).join(''));
let h='';for(let i=1;i<=26;i++)h+=`<div class="mcell d-flex flex-column${i==1?' cur':''}"><div class="mnum">${i}</div><div class="mbody"><div class="meter"></div></div></div>`;
mixer.innerHTML=h;
slots.innerHTML=[1,2,3].map(n=>`<div class="slot d-flex align-items-center"><button class="nm d-flex align-items-center"><svg class="ic sm me-1 text-light"><use href="#tri"/></svg>Slot ${n}</button><svg class="ic kn" style="width:28px;height:28px"><use href="#knob3"/></svg><input type="checkbox" class="led ms-1" aria-label="Slot ${n}"></div>`).join('');
h='';for(let i=1;i<=25;i++)h+=`<span class="${i%4==1?'maj':''}">${i}</span>`;ruler.innerHTML=h;
h='<div class="trk first"><div class="d-flex align-items-center"><span class="badgeA me-1">A</span>Loopback</div><button class="inbtn" aria-label="Entrée"><svg class="ic" viewBox="0 0 24 24"><use href="#route"/></svg></button><span class="more">...</span></div>';
for(let i=2;i<=13;i++)h+=`<div class="trk">Track ${i}<span class="more">...</span><input type="checkbox" class="led" aria-label="Track ${i}"></div>`;
tracks.innerHTML=h;
</script>
</body>
</html>
